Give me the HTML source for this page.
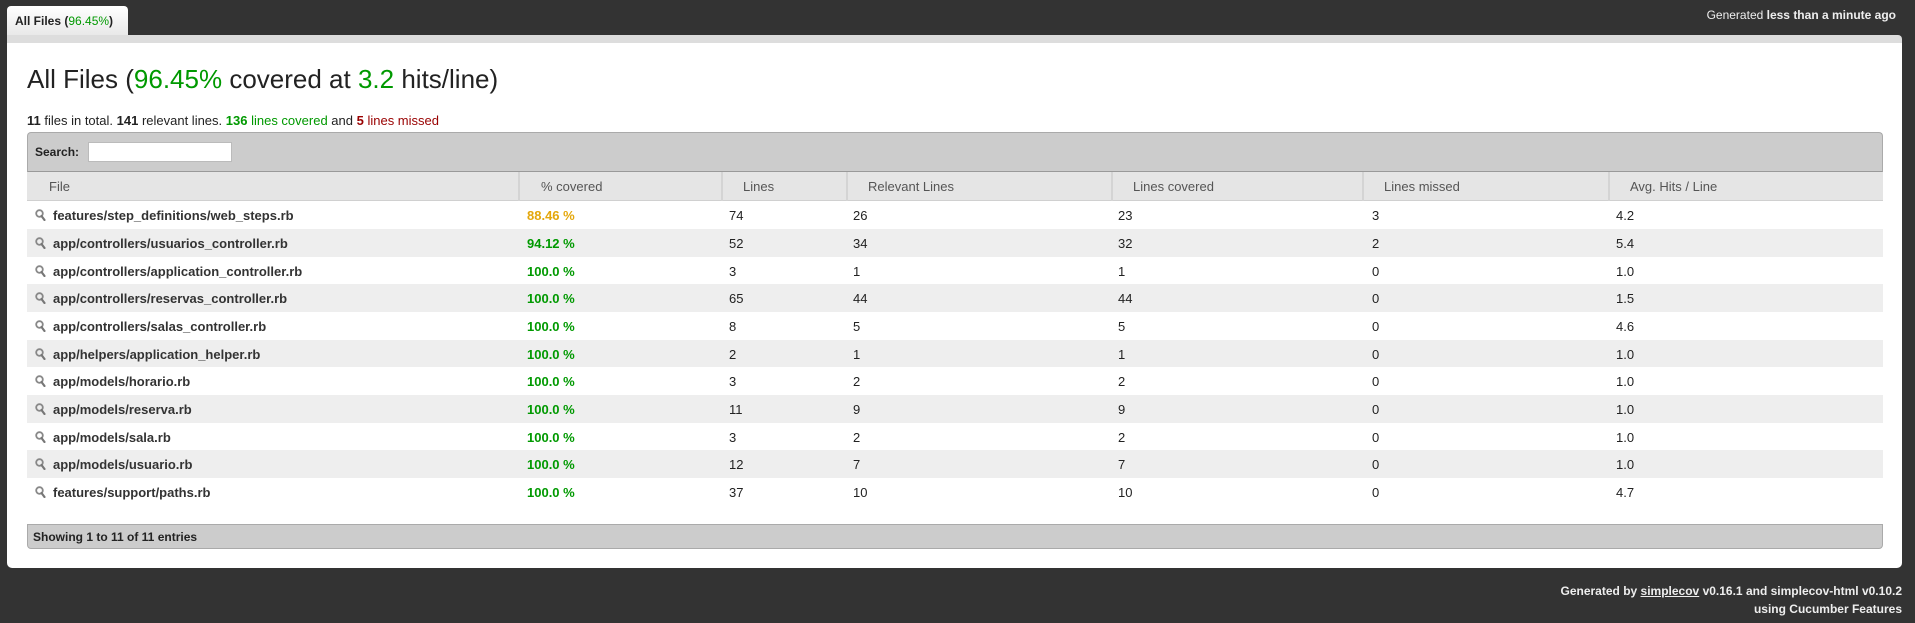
<!DOCTYPE html>
<html><head><meta charset="utf-8"><style>
*{margin:0;padding:0;box-sizing:border-box}
body{width:1915px;height:623px;background:#333;font-family:"Liberation Sans",Arial,sans-serif;position:relative;overflow:hidden}
.a{position:absolute;white-space:nowrap}
.g{color:#090}.r{color:#900}.o{color:#e4a70b}
.row{position:absolute;left:27px;width:1856px;height:28px;font-size:13px;color:#222}
.row span{position:absolute;top:7px;white-space:nowrap}
.row .f{left:26px;font-weight:bold;color:#333}
.row .p{left:500px;font-weight:bold}
.hdr span{position:absolute;top:7px;color:#555;font-size:13px}
.vl{position:absolute;top:0;width:2px;height:29px;background:#d4d4d4}
</style></head><body>
<div class="a" style="left:7px;top:6px;width:121px;height:30px;background:linear-gradient(#fff,#e8e8e8);border-radius:4px 4px 0 0"></div>
<div class="a" style="left:15px;top:14px;font-size:12px;font-weight:bold;color:#222">All Files (<span class="g" style="font-weight:normal">96.45%</span>)</div>
<div class="a" style="right:19px;top:8px;font-size:12px;color:#eee">Generated <b>less than a minute ago</b></div>
<div class="a" style="left:7px;top:35px;width:1895px;height:533px;background:#fff;border-radius:0 4px 5px 5px;border-top:8px solid #ddd"></div>
<div class="a" style="left:27px;top:64px;font-size:26px;color:#222">All Files (<span class="g">96.45%</span> covered at <span class="g">3.2</span> hits/line)</div>
<div class="a" style="left:27px;top:113px;font-size:13px;color:#222"><b>11</b> files in total. <b>141</b> relevant lines. <span class="g"><b>136</b> lines covered</span> and <span class="r"><b>5</b> lines missed</span></div>
<div class="a" style="left:27px;top:132px;width:1856px;height:40px;background:#ccc;border:1px solid #aaa;border-bottom:1px solid #999;border-radius:4px 4px 0 0"></div>
<div class="a" style="left:35px;top:145px;font-size:12px;font-weight:bold;color:#222">Search:</div>
<div class="a" style="left:88px;top:142px;width:144px;height:20px;background:#fff;border:1px solid #bbb"></div>
<div class="a hdr" style="left:27px;top:172px;width:1856px;height:29px;background:#e5e5e5;border-bottom:1px solid #d0d0d0">
<span style="left:22px">File</span><span style="left:514px">% covered</span><span style="left:716px">Lines</span><span style="left:841px">Relevant Lines</span><span style="left:1106px">Lines covered</span><span style="left:1357px">Lines missed</span><span style="left:1603px">Avg. Hits / Line</span>
<div class="vl" style="left:491px"></div><div class="vl" style="left:694px"></div><div class="vl" style="left:819px"></div><div class="vl" style="left:1084px"></div><div class="vl" style="left:1335px"></div><div class="vl" style="left:1581px"></div>
</div>
<svg width="0" height="0" style="position:absolute"><defs><symbol id="m" viewBox="0 0 11 12"><circle cx="4.5" cy="4.5" r="3.3" fill="none" stroke="#888" stroke-width="1.8"/><path d="M6.5 7 L9.5 11" stroke="#777" stroke-width="2.2" stroke-linecap="round"/></symbol></defs></svg>
<div class="row" style="top:201px;background:#fff"><svg class="a" style="left:8px;top:8px" width="11" height="12"><use href="#m"/></svg><span class="f">features/step_definitions/web_steps.rb</span><span class="p o">88.46 %</span><span style="left:702px">74</span><span style="left:826px">26</span><span style="left:1091px">23</span><span style="left:1345px">3</span><span style="left:1589px">4.2</span></div>
<div class="row" style="top:229px;background:#eee"><svg class="a" style="left:8px;top:8px" width="11" height="12"><use href="#m"/></svg><span class="f">app/controllers/usuarios_controller.rb</span><span class="p g">94.12 %</span><span style="left:702px">52</span><span style="left:826px">34</span><span style="left:1091px">32</span><span style="left:1345px">2</span><span style="left:1589px">5.4</span></div>
<div class="row" style="top:257px;background:#fff"><svg class="a" style="left:8px;top:8px" width="11" height="12"><use href="#m"/></svg><span class="f">app/controllers/application_controller.rb</span><span class="p g">100.0 %</span><span style="left:702px">3</span><span style="left:826px">1</span><span style="left:1091px">1</span><span style="left:1345px">0</span><span style="left:1589px">1.0</span></div>
<div class="row" style="top:284px;background:#eee"><svg class="a" style="left:8px;top:8px" width="11" height="12"><use href="#m"/></svg><span class="f">app/controllers/reservas_controller.rb</span><span class="p g">100.0 %</span><span style="left:702px">65</span><span style="left:826px">44</span><span style="left:1091px">44</span><span style="left:1345px">0</span><span style="left:1589px">1.5</span></div>
<div class="row" style="top:312px;background:#fff"><svg class="a" style="left:8px;top:8px" width="11" height="12"><use href="#m"/></svg><span class="f">app/controllers/salas_controller.rb</span><span class="p g">100.0 %</span><span style="left:702px">8</span><span style="left:826px">5</span><span style="left:1091px">5</span><span style="left:1345px">0</span><span style="left:1589px">4.6</span></div>
<div class="row" style="top:340px;background:#eee"><svg class="a" style="left:8px;top:8px" width="11" height="12"><use href="#m"/></svg><span class="f">app/helpers/application_helper.rb</span><span class="p g">100.0 %</span><span style="left:702px">2</span><span style="left:826px">1</span><span style="left:1091px">1</span><span style="left:1345px">0</span><span style="left:1589px">1.0</span></div>
<div class="row" style="top:367px;background:#fff"><svg class="a" style="left:8px;top:8px" width="11" height="12"><use href="#m"/></svg><span class="f">app/models/horario.rb</span><span class="p g">100.0 %</span><span style="left:702px">3</span><span style="left:826px">2</span><span style="left:1091px">2</span><span style="left:1345px">0</span><span style="left:1589px">1.0</span></div>
<div class="row" style="top:395px;background:#eee"><svg class="a" style="left:8px;top:8px" width="11" height="12"><use href="#m"/></svg><span class="f">app/models/reserva.rb</span><span class="p g">100.0 %</span><span style="left:702px">11</span><span style="left:826px">9</span><span style="left:1091px">9</span><span style="left:1345px">0</span><span style="left:1589px">1.0</span></div>
<div class="row" style="top:423px;background:#fff"><svg class="a" style="left:8px;top:8px" width="11" height="12"><use href="#m"/></svg><span class="f">app/models/sala.rb</span><span class="p g">100.0 %</span><span style="left:702px">3</span><span style="left:826px">2</span><span style="left:1091px">2</span><span style="left:1345px">0</span><span style="left:1589px">1.0</span></div>
<div class="row" style="top:450px;background:#eee"><svg class="a" style="left:8px;top:8px" width="11" height="12"><use href="#m"/></svg><span class="f">app/models/usuario.rb</span><span class="p g">100.0 %</span><span style="left:702px">12</span><span style="left:826px">7</span><span style="left:1091px">7</span><span style="left:1345px">0</span><span style="left:1589px">1.0</span></div>
<div class="row" style="top:478px;background:#fff"><svg class="a" style="left:8px;top:8px" width="11" height="12"><use href="#m"/></svg><span class="f">features/support/paths.rb</span><span class="p g">100.0 %</span><span style="left:702px">37</span><span style="left:826px">10</span><span style="left:1091px">10</span><span style="left:1345px">0</span><span style="left:1589px">4.7</span></div>
<div class="a" style="left:27px;top:524px;width:1856px;height:25px;background:#ccc;border:1px solid #aaa;border-radius:0 0 4px 4px"></div>
<div class="a" style="left:33px;top:530px;font-size:12px;font-weight:bold;color:#222">Showing 1 to 11 of 11 entries</div>
<div class="a" style="right:13px;top:582px;font-size:12px;font-weight:bold;color:#eee;text-align:right;line-height:18px">Generated by <u>simplecov</u> v0.16.1 and simplecov-html v0.10.2<br>using Cucumber Features</div>
</body></html>
